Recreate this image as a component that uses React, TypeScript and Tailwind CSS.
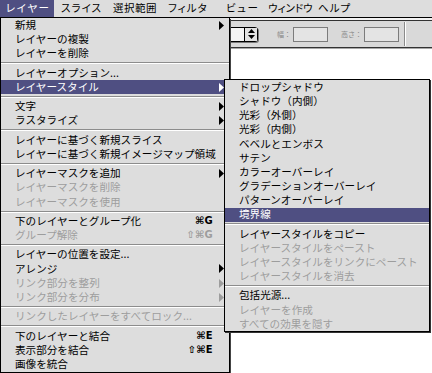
import React from 'react';

type Entry =
  | { sep: true }
  | {
      sep?: false;
      label: string;
      disabled?: boolean;
      sub?: boolean;
      shortcut?: string;
      active?: boolean;
    };

const layerMenu: Entry[] = [
  { label: '新規', sub: true },
  { label: 'レイヤーの複製' },
  { label: 'レイヤーを削除' },
  { sep: true },
  { label: 'レイヤーオプション...' },
  { label: 'レイヤースタイル', sub: true, active: true },
  { sep: true },
  { label: '文字', sub: true },
  { label: 'ラスタライズ', sub: true },
  { sep: true },
  { label: 'レイヤーに基づく新規スライス' },
  { label: 'レイヤーに基づく新規イメージマップ領域' },
  { sep: true },
  { label: 'レイヤーマスクを追加', sub: true },
  { label: 'レイヤーマスクを削除', disabled: true },
  { label: 'レイヤーマスクを使用', disabled: true },
  { sep: true },
  { label: '下のレイヤーとグループ化', shortcut: '⌘G' },
  { label: 'グループ解除', shortcut: '⇧⌘G', disabled: true },
  { sep: true },
  { label: 'レイヤーの位置を設定...' },
  { label: 'アレンジ', sub: true },
  { label: 'リンク部分を整列', sub: true, disabled: true },
  { label: 'リンク部分を分布', sub: true, disabled: true },
  { sep: true },
  { label: 'リンクしたレイヤーをすべてロック...', disabled: true },
  { sep: true },
  { label: '下のレイヤーと結合', shortcut: '⌘E' },
  { label: '表示部分を結合', shortcut: '⇧⌘E' },
  { label: '画像を統合' },
];

const styleMenu: Entry[] = [
  { label: 'ドロップシャドウ' },
  { label: 'シャドウ（内側）' },
  { label: '光彩（外側）' },
  { label: '光彩（内側）' },
  { label: 'ベベルとエンボス' },
  { label: 'サテン' },
  { label: 'カラーオーバーレイ' },
  { label: 'グラデーションオーバーレイ' },
  { label: 'パターンオーバーレイ' },
  { label: '境界線', active: true },
  { sep: true },
  { label: 'レイヤースタイルをコピー' },
  { label: 'レイヤースタイルをペースト', disabled: true },
  { label: 'レイヤースタイルをリンクにペースト', disabled: true },
  { label: 'レイヤースタイルを消去', disabled: true },
  { sep: true },
  { label: '包括光源...' },
  { label: 'レイヤーを作成', disabled: true },
  { label: 'すべての効果を隠す', disabled: true },
];

const Arrow = ({ color }: { color: string }) => (
  <svg width="5" height="9" viewBox="0 0 5 9">
    <polygon points="0,0 5,4.5 0,9" fill={color} />
  </svg>
);

const Separator = () => (
  <div className="h-[5px] flex flex-col justify-center">
    <div className="h-px bg-[#8c8c8c]" />
    <div className="h-px bg-white" />
  </div>
);

const MenuList = ({
  items,
  rowClass,
  padClass,
  arrows,
}: {
  items: Entry[];
  rowClass: string;
  padClass: string;
  arrows: boolean;
}) => (
  <div className="flex flex-col">
    {items.map((item, idx) => {
      if (item.sep) return <Separator key={idx} />;
      const color = item.active ? 'text-white' : item.disabled ? 'text-[#9d9d9d]' : 'text-black';
      const arrowColor = item.active ? '#ffffff' : item.disabled ? '#9d9d9d' : '#000000';
      return (
        <div
          key={idx}
          className={`${rowClass} ${padClass} flex items-center whitespace-nowrap ${color} ${
            item.active ? 'bg-[#4f4f82]' : ''
          }`}
        >
          <span className="flex-1">{item.label}</span>
          {item.shortcut && (
            <span className="font-['DejaVu_Sans',sans-serif] text-[10px] font-bold tracking-[0.3px]">
              {item.shortcut}
            </span>
          )}
          {arrows && (
            <span className="w-[11px] flex justify-end">{item.sub && <Arrow color={arrowColor} />}</span>
          )}
        </div>
      );
    })}
  </div>
);

const Stepper = () => (
  <svg width="7" height="10" viewBox="0 0 7 10">
    <polygon points="3.5,0 7,4 0,4" fill="#000" />
    <polygon points="0,6 7,6 3.5,10" fill="#000" />
  </svg>
);

export default function App() {
  return (
    <div className="relative w-[432px] h-[373px] overflow-hidden bg-white font-['Noto_Sans_CJK_JP','DejaVu_Sans',sans-serif] text-[10.6px] leading-none">
      {/* menu bar */}
      <div className="h-[18px] bg-[#dddddd] border-b border-black flex items-stretch whitespace-nowrap text-[10.5px] [font-feature-settings:'palt']">
        <span className="w-[54px] pl-[6px] flex items-center bg-[#4f4f82] text-white tracking-[1.5px]">レイヤー</span>
        <span className="w-[59px] pl-[7px] flex items-center tracking-[1px]">スライス</span>
        <span className="w-[55px] flex items-center tracking-[0.5px]">選択範囲</span>
        <span className="w-[58px] flex items-center tracking-[1px]">フィルタ</span>
        <span className="w-[42px] flex items-center tracking-[1.5px]">ビュー</span>
        <span className="w-[50px] flex items-center">ウィンドウ</span>
        <span className="flex items-center tracking-[1px]">ヘルプ</span>
      </div>

      {/* options bar behind the menus */}
      <div className="h-[2px] bg-[#f2f2f2]" />
      <div className="h-[28px] bg-[#d9d9d9] border-t border-[#333] border-b border-[#333] flex items-center">
        <div className="ml-[198px] w-[60px] h-[15px] bg-[#f4f4f4] border border-black rounded-r-[3px] shadow-[1px_1px_0_#7a7a7a] flex justify-end">
          <div className="w-[13px] border-l border-black bg-[#e2e2e2] flex items-center justify-center">
            <Stepper />
          </div>
        </div>
        <span className="ml-[19px] w-[16px] text-[7px] text-[#8a8a8a]">幅：</span>
        <div className="w-[35px] h-[15px] border border-[#7c7c7c] bg-[#e4e4e4]" />
        <span className="ml-[13px] w-[23px] text-[7px] text-[#8a8a8a]">高さ：</span>
        <div className="w-[35px] h-[15px] border border-[#7c7c7c] bg-[#e4e4e4]" />
        <div className="ml-[5px] h-[24px] w-px bg-[#8a8a8a]" />
        <div className="h-[24px] w-px bg-white" />
      </div>
      <div className="h-px bg-[#a8a8a8]" />

      {/* レイヤー menu */}
      <div className="absolute left-0 top-[18px] w-[230px] bg-[#dddddd] border-l border-r border-b border-black shadow-[1px_1px_0_#444]">
        <MenuList items={layerMenu} rowClass="h-[14.25px]" padClass="pl-[14px] pr-[5px]" arrows />
      </div>

      {/* レイヤースタイル submenu */}
      <div className="absolute left-[224px] top-[79px] w-[206px] bg-[#dddddd] border border-black shadow-[1px_1px_0_#333]">
        <MenuList items={styleMenu} rowClass="h-[14.2px]" padClass="pl-[14px] pr-[4px]" arrows={false} />
      </div>
    </div>
  );
}
